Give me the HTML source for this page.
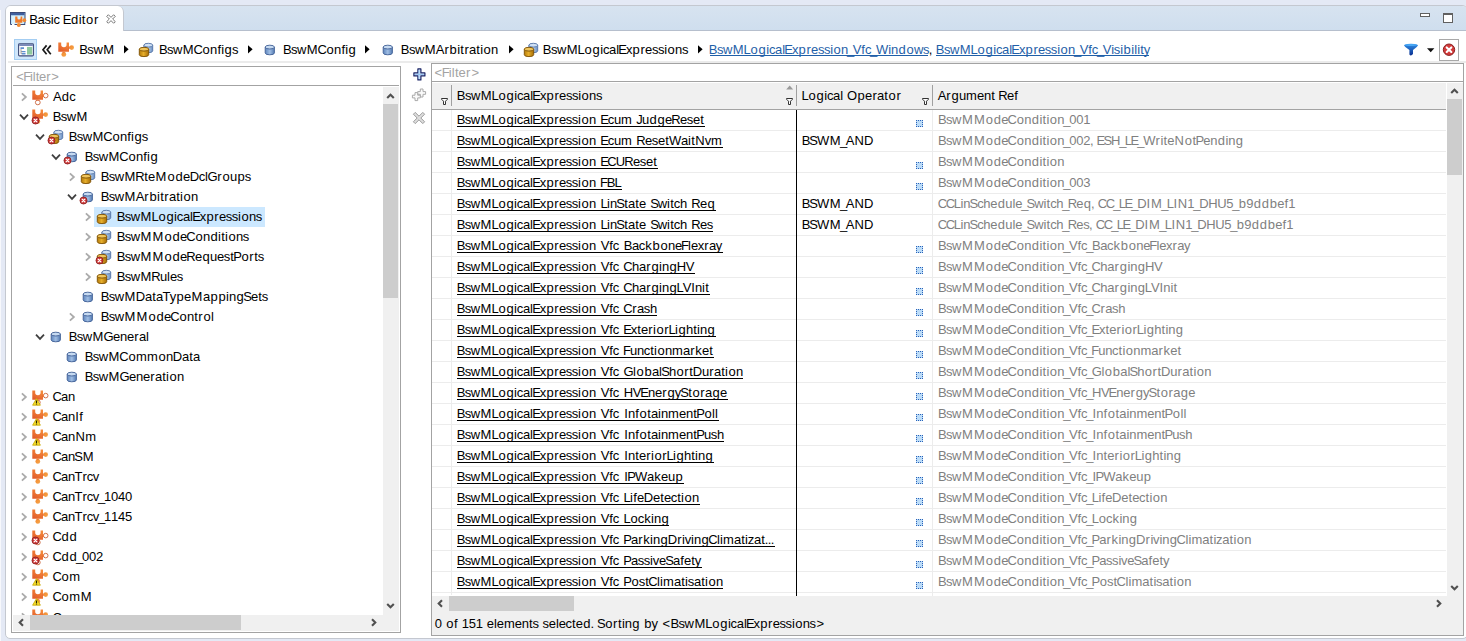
<!DOCTYPE html>
<html><head><meta charset="utf-8"><title>Basic Editor</title>
<style>
html,body{margin:0;padding:0}
body{width:1466px;height:641px;overflow:hidden;position:relative;background:#e4e9f5;font-family:"Liberation Sans", sans-serif;font-size:13px;color:#000}
.abs,.ic,.t{position:absolute}
.ic{display:block;overflow:visible}
#txt{position:absolute;left:0;top:0;display:block}
#txt text{white-space:pre;font-kerning:none;fill:#000}

#txt .lnk{fill:#1f5fa8}
#txt .gr{fill:#7f7f7f}
#txt .ph{fill:#a3a3a3}
#strip{position:absolute;left:0;top:10px;width:1px;height:631px;background:#f7f8fc}
#frame{position:absolute;left:5px;top:5px;width:1461px;height:632px;border:1px solid #c4c8d0;border-radius:6px 6px 5px 5px;background:#fff;overflow:hidden}
#tabbar{position:absolute;left:0;top:0;right:0;height:24px;background:linear-gradient(#d7e3f0,#cfdeee);border-bottom:1px solid #b6bfcd}
#tab{position:absolute;left:6px;top:6px;width:117px;height:25px;background:#fff;border-right:1px solid #c4c8d0;border-radius:5px 6px 0 0}
#bcline{position:absolute;left:8px;top:61px;width:1458px;height:2px;background:#ebebeb}
#tree{position:absolute;left:11px;top:66px;width:388px;height:565px;border:1px solid #a3a3a3;background:#fff}
#tfilter{position:absolute;left:1px;top:0;right:1px;height:18px;border-bottom:1px solid #a3a3a3}
#tsel{position:absolute;left:82px;top:140px;width:171px;height:20px;background:#cce8ff}
#tvs{z-index:5;position:absolute;left:371px;top:20px;width:16px;height:528px;background:#f0f0f0}
#ths{z-index:5;position:absolute;left:1px;top:548px;width:386px;height:16px;background:#f0f0f0}
.thumb{position:absolute;background:#cdcdcd}
#treeclip{position:absolute;left:12px;top:86px;width:371px;height:529px;overflow:hidden}
#treeclip>*{margin-left:-12px;margin-top:-86px}
#rp{position:absolute;left:431px;top:63px;width:1031px;height:571px;border:1px solid #a3a3a3;background:#f0f0f0}
#rfilter{position:absolute;left:0;top:0;right:0;height:17px;background:#fff;border-bottom:1px solid #a3a3a3}
#rhead{position:absolute;left:0;top:19px;width:1014px;height:26px;background:#f0f0f0;border-bottom:1px solid #a3a3a3}
#rbody{position:absolute;left:0;top:18px;width:1031px;height:514px;background:#fff}
#rvs{position:absolute;left:1015px;top:19px;width:16px;height:513px;background:#f0f0f0}
#rhs{position:absolute;left:0;top:532px;width:1014px;height:16px;background:#f0f0f0}
.sq{width:5px;height:5px;background:#bcdcf8;border:1px dotted #2a62b8}
</style></head>
<body>
<svg width="0" height="0" style="position:absolute;left:0;top:0"><defs><linearGradient id="gp" x1="0.8" y1="0" x2="0.2" y2="1"><stop offset="0" stop-color="#f58c3c"/><stop offset="1" stop-color="#e15a2a"/></linearGradient><linearGradient id="gk" x1="0" y1="0" x2="1" y2="1"><stop offset="0" stop-color="#f28a30"/><stop offset="1" stop-color="#f6a54a"/></linearGradient><linearGradient id="gb" x1="0" y1="0" x2="1" y2="0"><stop offset="0" stop-color="#5f86bd"/><stop offset="0.5" stop-color="#a0bee4"/><stop offset="1" stop-color="#547bb3"/></linearGradient><linearGradient id="gb2" x1="0" y1="0" x2="1" y2="0"><stop offset="0" stop-color="#7d9fcd"/><stop offset="0.5" stop-color="#b4cdea"/><stop offset="1" stop-color="#6a8fc2"/></linearGradient><linearGradient id="gy" x1="0" y1="0" x2="1" y2="0"><stop offset="0" stop-color="#b67d0a"/><stop offset="0.45" stop-color="#e6ae2c"/><stop offset="1" stop-color="#a86f05"/></linearGradient><linearGradient id="gf" x1="0" y1="0" x2="0" y2="1"><stop offset="0" stop-color="#2f8fe8"/><stop offset="1" stop-color="#0b2f8f"/></linearGradient></defs></svg>
<div id="strip"></div>
<div id="frame"><div id="tabbar"></div></div>
<div id="tab"></div>
<svg class="ic" style="left:10px;top:12px" width="17" height="16" viewBox="0 0 17 16">
<rect x="0.5" y="0.5" width="14.5" height="12" fill="#bfe3f8" stroke="#3a4a78"/>
<rect x="1" y="1" width="13.5" height="2.2" fill="#3f5f9f"/>
<rect x="2" y="4" width="11.5" height="8" fill="#d8f0fc"/>
<path d="M5.2 4.6 H7.4 V6 A1.6 1.6 0 0 0 10.6 6 V4.6 H12.3 V10.8 H5.2 Z" fill="#f07a2a"/>
<circle cx="14.3" cy="8.2" r="1.9" fill="#f28a30"/><circle cx="8.8" cy="12.9" r="2" fill="#f28a30"/>
<rect x="15" y="11" width="2" height="3" fill="#fff"/><rect x="0" y="12" width="4.5" height="2" fill="#fff"/>
<path d="M0.5 11 V12.5 H2" fill="none" stroke="#3a4a78"/><path d="M12.5 12.5 H15 V11.5" fill="none" stroke="#3a4a78"/>
</svg>
<svg class="ic" style="left:106px;top:14px" width="10" height="10" viewBox="0 0 11 11">
<path d="M0.8 2.6 L2.6 0.8 L5.5 3.7 L8.4 0.8 L10.2 2.6 L7.3 5.5 L10.2 8.4 L8.4 10.2 L5.5 7.3 L2.6 10.2 L0.8 8.4 L3.7 5.5 Z" fill="#fff" stroke="#5a5a5a" stroke-width="0.9"/></svg>
<div class="abs" style="left:1420px;top:13px;width:8px;height:2px;border:1px solid #606060;background:#fff"></div>
<div class="abs" style="left:1443px;top:13px;width:8px;height:7px;border:1px solid #606060;border-top-width:2px;background:#fff"></div>
<div id="bcline"></div>
<div class="abs" style="left:14px;top:39px;width:21px;height:19px;border:1px solid #a3cdf2;background:#cfe6fa"></div>
<svg class="ic" style="left:18px;top:43px" width="16" height="14" viewBox="0 0 16 15" preserveAspectRatio="none">
<rect x="0.6" y="0.8" width="14.8" height="13" rx="1" fill="#fff" stroke="#3d4b7a" stroke-width="1.1"/>
<rect x="1.2" y="1.4" width="13.6" height="1.6" fill="#5a6ea8"/>
<rect x="9" y="4.2" width="5.2" height="8.2" fill="#8fcaa0"/>
<path d="M2.5 4.5 H6 V6.5 H2.5 Z M4 8.5 H7.5 V10 H4 Z M4 10.8 H7.5 V12.3 H4 Z" fill="#5f8fd0"/>
<path d="M3 6.5 V11.5 H4 M3 9.2 H4" fill="none" stroke="#777" stroke-width="0.7"/>
</svg>
<svg class="ic" style="left:41.5px;top:45px" width="10" height="10" viewBox="0 0 10 10"><path d="M4.6 0.4 L1 4.8 L4.6 9.2 M8.8 0.4 L5.2 4.8 L8.8 9.2" fill="none" stroke="#1a1a1a" stroke-width="1.7"/></svg>
<svg class="ic" style="left:58px;top:42px" width="17" height="16" viewBox="0 0 17 16">
<path d="M0.3 0.6 H3.2 V2.6 A2.7 2.7 0 0 0 8.6 2.6 V0.6 H11 V9.8 H0.3 Z" fill="url(#gp)"/>
<circle cx="13.7" cy="5.6" r="2.3" fill="url(#gk)" stroke="none" stroke-width="0"/>
<rect x="10.6" y="4.4" width="1.2" height="2.4" fill="url(#gp)"/>
<circle cx="5.8" cy="12.4" r="2.4" fill="url(#gk)" stroke="none" stroke-width="0"/>
<rect x="4.6" y="9.4" width="2.4" height="1.1" fill="url(#gp)"/>
</svg>
<svg class="ic" style="left:124px;top:45px" width="5" height="9" viewBox="0 0 5 9"><path d="M0 0.2 L4.6 4.3 L0 8.4 Z" fill="#000"/></svg>
<svg class="ic" style="left:138px;top:40px" width="16" height="16" viewBox="0 0 16 16">
<path d="M5.9 5.199999999999999 V10.799999999999999 A4.4 1.9 0 0 0 14.700000000000001 10.799999999999999 V5.199999999999999 Z" fill="url(#gb2)" stroke="#5273a6" stroke-width="0.9"/><ellipse cx="10.3" cy="5.199999999999999" rx="4.4" ry="1.9" fill="#cfe0f4" stroke="#5273a6" stroke-width="0.9"/>
<path d="M1.2999999999999998 9.2 V14.700000000000001 A4.7 1.9 0 0 0 10.7 14.700000000000001 V9.2 Z" fill="url(#gy)" stroke="#7a4d00" stroke-width="0.9"/><ellipse cx="6.0" cy="9.2" rx="4.7" ry="1.9" fill="#efc55c" stroke="#7a4d00" stroke-width="0.9"/>
</svg>
<svg class="ic" style="left:248.3px;top:45px" width="5" height="9" viewBox="0 0 5 9"><path d="M0 0.2 L4.6 4.3 L0 8.4 Z" fill="#000"/></svg>
<svg class="ic" style="left:262px;top:40px" width="16" height="16" viewBox="0 0 16 16">
<path d="M3.2 7.1 V12.9 A4.6 1.9 0 0 0 12.399999999999999 12.9 V7.1 Z" fill="url(#gb)" stroke="#3f5f95" stroke-width="0.9"/><ellipse cx="7.8" cy="7.1" rx="4.6" ry="1.9" fill="#c6daf1" stroke="#3f5f95" stroke-width="0.9"/>
</svg>
<svg class="ic" style="left:365px;top:45px" width="5" height="9" viewBox="0 0 5 9"><path d="M0 0.2 L4.6 4.3 L0 8.4 Z" fill="#000"/></svg>
<svg class="ic" style="left:380px;top:40px" width="16" height="16" viewBox="0 0 16 16">
<path d="M3.2 7.1 V12.9 A4.6 1.9 0 0 0 12.399999999999999 12.9 V7.1 Z" fill="url(#gb)" stroke="#3f5f95" stroke-width="0.9"/><ellipse cx="7.8" cy="7.1" rx="4.6" ry="1.9" fill="#c6daf1" stroke="#3f5f95" stroke-width="0.9"/>
</svg>
<svg class="ic" style="left:508.5px;top:45px" width="5" height="9" viewBox="0 0 5 9"><path d="M0 0.2 L4.6 4.3 L0 8.4 Z" fill="#000"/></svg>
<svg class="ic" style="left:523px;top:40px" width="16" height="16" viewBox="0 0 16 16">
<path d="M5.9 5.199999999999999 V10.799999999999999 A4.4 1.9 0 0 0 14.700000000000001 10.799999999999999 V5.199999999999999 Z" fill="url(#gb2)" stroke="#5273a6" stroke-width="0.9"/><ellipse cx="10.3" cy="5.199999999999999" rx="4.4" ry="1.9" fill="#cfe0f4" stroke="#5273a6" stroke-width="0.9"/>
<path d="M1.2999999999999998 9.2 V14.700000000000001 A4.7 1.9 0 0 0 10.7 14.700000000000001 V9.2 Z" fill="url(#gy)" stroke="#7a4d00" stroke-width="0.9"/><ellipse cx="6.0" cy="9.2" rx="4.7" ry="1.9" fill="#efc55c" stroke="#7a4d00" stroke-width="0.9"/>
</svg>
<svg class="ic" style="left:697.8px;top:45px" width="5" height="9" viewBox="0 0 5 9"><path d="M0 0.2 L4.6 4.3 L0 8.4 Z" fill="#000"/></svg>
<svg class="ic" style="left:1403px;top:43px" width="16" height="14" viewBox="0 0 16 14">
<path d="M1 2 Q8 -0.6 15 2 Q15 3.4 10 7 V11 Q8 13.6 6.4 11.6 V7 Q1 3.4 1 2 Z" fill="url(#gf)"/>
<ellipse cx="8" cy="2" rx="6" ry="1.1" fill="#4aa8f5"/></svg>
<svg class="ic" style="left:1427px;top:48px" width="8" height="5" viewBox="0 0 8 5"><path d="M0 0.3 H7.4 L3.7 4.2 Z" fill="#111"/></svg>
<div class="abs" style="left:1439px;top:39px;width:18px;height:20px;border:1px solid #a8a8a8;background:#fff"></div>
<svg class="ic" style="left:1442px;top:43px" width="14" height="14" viewBox="0 0 14 14">
<circle cx="7" cy="6.7" r="5.7" fill="#d23a3a" stroke="#8a2020" stroke-width="1"/>
<path d="M4.7 4.4 L9.3 9 M9.3 4.4 L4.7 9" stroke="#fff" stroke-width="2.1" stroke-linecap="round"/></svg>
<div id="tree"><div id="tfilter"></div><div id="tsel"></div><div id="tvs"><div class="thumb" style="left:0;top:17px;width:15px;height:194px"></div></div><div id="ths"><div class="thumb" style="left:17px;top:0;width:211px;height:15px"></div></div></div>
<div id="treeclip"><svg class="ic" style="left:19.5px;top:91.5px" width="8" height="10" viewBox="0 0 8 10"><path d="M1.9 1.3 L5.9 5 L1.9 8.7" fill="none" stroke="#ababab" stroke-width="1.8"/></svg><svg class="ic" style="left:32px;top:90px" width="17" height="16" viewBox="0 0 17 16">
<path d="M0.3 0.6 H3.2 V2.6 A2.7 2.7 0 0 0 8.6 2.6 V0.6 H11 V9.8 H0.3 Z" fill="url(#gp)"/>
<circle cx="13.7" cy="5.6" r="2.3" fill="#fff" stroke="#c8623a" stroke-width="0.9"/>
<rect x="10.6" y="4.4" width="1.2" height="2.4" fill="url(#gp)"/>
<circle cx="5.8" cy="12.4" r="2.4" fill="#fff" stroke="#c8623a" stroke-width="0.9"/>
<rect x="4.6" y="9.4" width="2.4" height="1.1" fill="url(#gp)"/>
</svg><svg class="ic" style="left:18.5px;top:112.5px" width="10" height="8" viewBox="0 0 10 8"><path d="M1 1.7 L5 5.9 L9 1.7" fill="none" stroke="#404040" stroke-width="1.8"/></svg><svg class="ic" style="left:32px;top:109px" width="17" height="16" viewBox="0 0 17 16">
<path d="M0.3 0.6 H3.2 V2.6 A2.7 2.7 0 0 0 8.6 2.6 V0.6 H11 V9.8 H0.3 Z" fill="url(#gp)"/>
<circle cx="13.7" cy="5.6" r="2.3" fill="url(#gk)" stroke="none" stroke-width="0"/>
<rect x="10.6" y="4.4" width="1.2" height="2.4" fill="url(#gp)"/>
<circle cx="5.8" cy="12.4" r="2.4" fill="url(#gk)" stroke="none" stroke-width="0"/>
<rect x="4.6" y="9.4" width="2.4" height="1.1" fill="url(#gp)"/>
</svg><svg class="ic" style="left:31px;top:116px" width="9" height="9" viewBox="0 0 9 9">
<circle cx="4.5" cy="4.5" r="3.5" fill="#cf3535" stroke="#8e1f1f" stroke-width="0.9"/>
<path d="M3.1 3.1 L5.9 5.9 M5.9 3.1 L3.1 5.9" stroke="#fff" stroke-width="1.3" stroke-linecap="round"/>
</svg><svg class="ic" style="left:34.5px;top:132.5px" width="10" height="8" viewBox="0 0 10 8"><path d="M1 1.7 L5 5.9 L9 1.7" fill="none" stroke="#404040" stroke-width="1.8"/></svg><svg class="ic" style="left:48px;top:127px" width="16" height="16" viewBox="0 0 16 16">
<path d="M5.9 5.199999999999999 V10.799999999999999 A4.4 1.9 0 0 0 14.700000000000001 10.799999999999999 V5.199999999999999 Z" fill="url(#gb2)" stroke="#5273a6" stroke-width="0.9"/><ellipse cx="10.3" cy="5.199999999999999" rx="4.4" ry="1.9" fill="#cfe0f4" stroke="#5273a6" stroke-width="0.9"/>
<path d="M1.2999999999999998 9.2 V14.700000000000001 A4.7 1.9 0 0 0 10.7 14.700000000000001 V9.2 Z" fill="url(#gy)" stroke="#7a4d00" stroke-width="0.9"/><ellipse cx="6.0" cy="9.2" rx="4.7" ry="1.9" fill="#efc55c" stroke="#7a4d00" stroke-width="0.9"/>
</svg><svg class="ic" style="left:47px;top:136px" width="9" height="9" viewBox="0 0 9 9">
<circle cx="4.5" cy="4.5" r="3.5" fill="#cf3535" stroke="#8e1f1f" stroke-width="0.9"/>
<path d="M3.1 3.1 L5.9 5.9 M5.9 3.1 L3.1 5.9" stroke="#fff" stroke-width="1.3" stroke-linecap="round"/>
</svg><svg class="ic" style="left:50.5px;top:152.5px" width="10" height="8" viewBox="0 0 10 8"><path d="M1 1.7 L5 5.9 L9 1.7" fill="none" stroke="#404040" stroke-width="1.8"/></svg><svg class="ic" style="left:64px;top:147px" width="16" height="16" viewBox="0 0 16 16">
<path d="M3.2 7.1 V12.9 A4.6 1.9 0 0 0 12.399999999999999 12.9 V7.1 Z" fill="url(#gb)" stroke="#3f5f95" stroke-width="0.9"/><ellipse cx="7.8" cy="7.1" rx="4.6" ry="1.9" fill="#c6daf1" stroke="#3f5f95" stroke-width="0.9"/>
</svg><svg class="ic" style="left:63px;top:156px" width="9" height="9" viewBox="0 0 9 9">
<circle cx="4.5" cy="4.5" r="3.5" fill="#cf3535" stroke="#8e1f1f" stroke-width="0.9"/>
<path d="M3.1 3.1 L5.9 5.9 M5.9 3.1 L3.1 5.9" stroke="#fff" stroke-width="1.3" stroke-linecap="round"/>
</svg><svg class="ic" style="left:67.5px;top:171.5px" width="8" height="10" viewBox="0 0 8 10"><path d="M1.9 1.3 L5.9 5 L1.9 8.7" fill="none" stroke="#ababab" stroke-width="1.8"/></svg><svg class="ic" style="left:80px;top:167px" width="16" height="16" viewBox="0 0 16 16">
<path d="M5.9 5.199999999999999 V10.799999999999999 A4.4 1.9 0 0 0 14.700000000000001 10.799999999999999 V5.199999999999999 Z" fill="url(#gb2)" stroke="#5273a6" stroke-width="0.9"/><ellipse cx="10.3" cy="5.199999999999999" rx="4.4" ry="1.9" fill="#cfe0f4" stroke="#5273a6" stroke-width="0.9"/>
<path d="M1.2999999999999998 9.2 V14.700000000000001 A4.7 1.9 0 0 0 10.7 14.700000000000001 V9.2 Z" fill="url(#gy)" stroke="#7a4d00" stroke-width="0.9"/><ellipse cx="6.0" cy="9.2" rx="4.7" ry="1.9" fill="#efc55c" stroke="#7a4d00" stroke-width="0.9"/>
</svg><svg class="ic" style="left:66.5px;top:192.5px" width="10" height="8" viewBox="0 0 10 8"><path d="M1 1.7 L5 5.9 L9 1.7" fill="none" stroke="#404040" stroke-width="1.8"/></svg><svg class="ic" style="left:80px;top:187px" width="16" height="16" viewBox="0 0 16 16">
<path d="M3.2 7.1 V12.9 A4.6 1.9 0 0 0 12.399999999999999 12.9 V7.1 Z" fill="url(#gb)" stroke="#3f5f95" stroke-width="0.9"/><ellipse cx="7.8" cy="7.1" rx="4.6" ry="1.9" fill="#c6daf1" stroke="#3f5f95" stroke-width="0.9"/>
</svg><svg class="ic" style="left:79px;top:196px" width="9" height="9" viewBox="0 0 9 9">
<circle cx="4.5" cy="4.5" r="3.5" fill="#cf3535" stroke="#8e1f1f" stroke-width="0.9"/>
<path d="M3.1 3.1 L5.9 5.9 M5.9 3.1 L3.1 5.9" stroke="#fff" stroke-width="1.3" stroke-linecap="round"/>
</svg><svg class="ic" style="left:83.5px;top:211.5px" width="8" height="10" viewBox="0 0 8 10"><path d="M1.9 1.3 L5.9 5 L1.9 8.7" fill="none" stroke="#ababab" stroke-width="1.8"/></svg><svg class="ic" style="left:96px;top:207px" width="16" height="16" viewBox="0 0 16 16">
<path d="M5.9 5.199999999999999 V10.799999999999999 A4.4 1.9 0 0 0 14.700000000000001 10.799999999999999 V5.199999999999999 Z" fill="url(#gb2)" stroke="#5273a6" stroke-width="0.9"/><ellipse cx="10.3" cy="5.199999999999999" rx="4.4" ry="1.9" fill="#cfe0f4" stroke="#5273a6" stroke-width="0.9"/>
<path d="M1.2999999999999998 9.2 V14.700000000000001 A4.7 1.9 0 0 0 10.7 14.700000000000001 V9.2 Z" fill="url(#gy)" stroke="#7a4d00" stroke-width="0.9"/><ellipse cx="6.0" cy="9.2" rx="4.7" ry="1.9" fill="#efc55c" stroke="#7a4d00" stroke-width="0.9"/>
</svg><svg class="ic" style="left:83.5px;top:231.5px" width="8" height="10" viewBox="0 0 8 10"><path d="M1.9 1.3 L5.9 5 L1.9 8.7" fill="none" stroke="#ababab" stroke-width="1.8"/></svg><svg class="ic" style="left:96px;top:227px" width="16" height="16" viewBox="0 0 16 16">
<path d="M5.9 5.199999999999999 V10.799999999999999 A4.4 1.9 0 0 0 14.700000000000001 10.799999999999999 V5.199999999999999 Z" fill="url(#gb2)" stroke="#5273a6" stroke-width="0.9"/><ellipse cx="10.3" cy="5.199999999999999" rx="4.4" ry="1.9" fill="#cfe0f4" stroke="#5273a6" stroke-width="0.9"/>
<path d="M1.2999999999999998 9.2 V14.700000000000001 A4.7 1.9 0 0 0 10.7 14.700000000000001 V9.2 Z" fill="url(#gy)" stroke="#7a4d00" stroke-width="0.9"/><ellipse cx="6.0" cy="9.2" rx="4.7" ry="1.9" fill="#efc55c" stroke="#7a4d00" stroke-width="0.9"/>
</svg><svg class="ic" style="left:83.5px;top:251.5px" width="8" height="10" viewBox="0 0 8 10"><path d="M1.9 1.3 L5.9 5 L1.9 8.7" fill="none" stroke="#ababab" stroke-width="1.8"/></svg><svg class="ic" style="left:96px;top:247px" width="16" height="16" viewBox="0 0 16 16">
<path d="M5.9 5.199999999999999 V10.799999999999999 A4.4 1.9 0 0 0 14.700000000000001 10.799999999999999 V5.199999999999999 Z" fill="url(#gb2)" stroke="#5273a6" stroke-width="0.9"/><ellipse cx="10.3" cy="5.199999999999999" rx="4.4" ry="1.9" fill="#cfe0f4" stroke="#5273a6" stroke-width="0.9"/>
<path d="M1.2999999999999998 9.2 V14.700000000000001 A4.7 1.9 0 0 0 10.7 14.700000000000001 V9.2 Z" fill="url(#gy)" stroke="#7a4d00" stroke-width="0.9"/><ellipse cx="6.0" cy="9.2" rx="4.7" ry="1.9" fill="#efc55c" stroke="#7a4d00" stroke-width="0.9"/>
</svg><svg class="ic" style="left:95px;top:256px" width="9" height="9" viewBox="0 0 9 9">
<circle cx="4.5" cy="4.5" r="3.5" fill="#cf3535" stroke="#8e1f1f" stroke-width="0.9"/>
<path d="M3.1 3.1 L5.9 5.9 M5.9 3.1 L3.1 5.9" stroke="#fff" stroke-width="1.3" stroke-linecap="round"/>
</svg><svg class="ic" style="left:83.5px;top:271.5px" width="8" height="10" viewBox="0 0 8 10"><path d="M1.9 1.3 L5.9 5 L1.9 8.7" fill="none" stroke="#ababab" stroke-width="1.8"/></svg><svg class="ic" style="left:96px;top:267px" width="16" height="16" viewBox="0 0 16 16">
<path d="M5.9 5.199999999999999 V10.799999999999999 A4.4 1.9 0 0 0 14.700000000000001 10.799999999999999 V5.199999999999999 Z" fill="url(#gb2)" stroke="#5273a6" stroke-width="0.9"/><ellipse cx="10.3" cy="5.199999999999999" rx="4.4" ry="1.9" fill="#cfe0f4" stroke="#5273a6" stroke-width="0.9"/>
<path d="M1.2999999999999998 9.2 V14.700000000000001 A4.7 1.9 0 0 0 10.7 14.700000000000001 V9.2 Z" fill="url(#gy)" stroke="#7a4d00" stroke-width="0.9"/><ellipse cx="6.0" cy="9.2" rx="4.7" ry="1.9" fill="#efc55c" stroke="#7a4d00" stroke-width="0.9"/>
</svg><svg class="ic" style="left:80px;top:287px" width="16" height="16" viewBox="0 0 16 16">
<path d="M3.2 7.1 V12.9 A4.6 1.9 0 0 0 12.399999999999999 12.9 V7.1 Z" fill="url(#gb)" stroke="#3f5f95" stroke-width="0.9"/><ellipse cx="7.8" cy="7.1" rx="4.6" ry="1.9" fill="#c6daf1" stroke="#3f5f95" stroke-width="0.9"/>
</svg><svg class="ic" style="left:67.5px;top:311.5px" width="8" height="10" viewBox="0 0 8 10"><path d="M1.9 1.3 L5.9 5 L1.9 8.7" fill="none" stroke="#ababab" stroke-width="1.8"/></svg><svg class="ic" style="left:80px;top:307px" width="16" height="16" viewBox="0 0 16 16">
<path d="M3.2 7.1 V12.9 A4.6 1.9 0 0 0 12.399999999999999 12.9 V7.1 Z" fill="url(#gb)" stroke="#3f5f95" stroke-width="0.9"/><ellipse cx="7.8" cy="7.1" rx="4.6" ry="1.9" fill="#c6daf1" stroke="#3f5f95" stroke-width="0.9"/>
</svg><svg class="ic" style="left:34.5px;top:332.5px" width="10" height="8" viewBox="0 0 10 8"><path d="M1 1.7 L5 5.9 L9 1.7" fill="none" stroke="#404040" stroke-width="1.8"/></svg><svg class="ic" style="left:48px;top:327px" width="16" height="16" viewBox="0 0 16 16">
<path d="M3.2 7.1 V12.9 A4.6 1.9 0 0 0 12.399999999999999 12.9 V7.1 Z" fill="url(#gb)" stroke="#3f5f95" stroke-width="0.9"/><ellipse cx="7.8" cy="7.1" rx="4.6" ry="1.9" fill="#c6daf1" stroke="#3f5f95" stroke-width="0.9"/>
</svg><svg class="ic" style="left:64px;top:347px" width="16" height="16" viewBox="0 0 16 16">
<path d="M3.2 7.1 V12.9 A4.6 1.9 0 0 0 12.399999999999999 12.9 V7.1 Z" fill="url(#gb)" stroke="#3f5f95" stroke-width="0.9"/><ellipse cx="7.8" cy="7.1" rx="4.6" ry="1.9" fill="#c6daf1" stroke="#3f5f95" stroke-width="0.9"/>
</svg><svg class="ic" style="left:64px;top:367px" width="16" height="16" viewBox="0 0 16 16">
<path d="M3.2 7.1 V12.9 A4.6 1.9 0 0 0 12.399999999999999 12.9 V7.1 Z" fill="url(#gb)" stroke="#3f5f95" stroke-width="0.9"/><ellipse cx="7.8" cy="7.1" rx="4.6" ry="1.9" fill="#c6daf1" stroke="#3f5f95" stroke-width="0.9"/>
</svg><svg class="ic" style="left:19.5px;top:391.5px" width="8" height="10" viewBox="0 0 8 10"><path d="M1.9 1.3 L5.9 5 L1.9 8.7" fill="none" stroke="#ababab" stroke-width="1.8"/></svg><svg class="ic" style="left:32px;top:390px" width="17" height="16" viewBox="0 0 17 16">
<path d="M0.3 0.6 H3.2 V2.6 A2.7 2.7 0 0 0 8.6 2.6 V0.6 H11 V9.8 H0.3 Z" fill="url(#gp)"/>
<circle cx="13.7" cy="5.6" r="2.3" fill="#fff" stroke="#c8623a" stroke-width="0.9"/>
<rect x="10.6" y="4.4" width="1.2" height="2.4" fill="url(#gp)"/>
<circle cx="5.8" cy="12.4" r="2.4" fill="#fff" stroke="#c8623a" stroke-width="0.9"/>
<rect x="4.6" y="9.4" width="2.4" height="1.1" fill="url(#gp)"/>
</svg><svg class="ic" style="left:31.7px;top:397.6px" width="9" height="8" viewBox="0 0 9 8">
<path d="M4.5 0.6 L8.4 7.2 H0.6 Z" fill="#f7e02a" stroke="#c4a400" stroke-width="0.8" stroke-linejoin="round"/>
<path d="M4.5 2.4 V4.9 M4.5 5.6 V6.5" stroke="#2a2400" stroke-width="1.2"/>
</svg><svg class="ic" style="left:19.5px;top:411.5px" width="8" height="10" viewBox="0 0 8 10"><path d="M1.9 1.3 L5.9 5 L1.9 8.7" fill="none" stroke="#ababab" stroke-width="1.8"/></svg><svg class="ic" style="left:32px;top:409px" width="17" height="16" viewBox="0 0 17 16">
<path d="M0.3 0.6 H3.2 V2.6 A2.7 2.7 0 0 0 8.6 2.6 V0.6 H11 V9.8 H0.3 Z" fill="url(#gp)"/>
<circle cx="13.7" cy="5.6" r="2.3" fill="url(#gk)" stroke="none" stroke-width="0"/>
<rect x="10.6" y="4.4" width="1.2" height="2.4" fill="url(#gp)"/>
<circle cx="5.8" cy="12.4" r="2.4" fill="url(#gk)" stroke="none" stroke-width="0"/>
<rect x="4.6" y="9.4" width="2.4" height="1.1" fill="url(#gp)"/>
</svg><svg class="ic" style="left:31.7px;top:417.6px" width="9" height="8" viewBox="0 0 9 8">
<path d="M4.5 0.6 L8.4 7.2 H0.6 Z" fill="#f7e02a" stroke="#c4a400" stroke-width="0.8" stroke-linejoin="round"/>
<path d="M4.5 2.4 V4.9 M4.5 5.6 V6.5" stroke="#2a2400" stroke-width="1.2"/>
</svg><svg class="ic" style="left:19.5px;top:431.5px" width="8" height="10" viewBox="0 0 8 10"><path d="M1.9 1.3 L5.9 5 L1.9 8.7" fill="none" stroke="#ababab" stroke-width="1.8"/></svg><svg class="ic" style="left:32px;top:429px" width="17" height="16" viewBox="0 0 17 16">
<path d="M0.3 0.6 H3.2 V2.6 A2.7 2.7 0 0 0 8.6 2.6 V0.6 H11 V9.8 H0.3 Z" fill="url(#gp)"/>
<circle cx="13.7" cy="5.6" r="2.3" fill="url(#gk)" stroke="none" stroke-width="0"/>
<rect x="10.6" y="4.4" width="1.2" height="2.4" fill="url(#gp)"/>
<circle cx="5.8" cy="12.4" r="2.4" fill="url(#gk)" stroke="none" stroke-width="0"/>
<rect x="4.6" y="9.4" width="2.4" height="1.1" fill="url(#gp)"/>
</svg><svg class="ic" style="left:31.7px;top:437.6px" width="9" height="8" viewBox="0 0 9 8">
<path d="M4.5 0.6 L8.4 7.2 H0.6 Z" fill="#f7e02a" stroke="#c4a400" stroke-width="0.8" stroke-linejoin="round"/>
<path d="M4.5 2.4 V4.9 M4.5 5.6 V6.5" stroke="#2a2400" stroke-width="1.2"/>
</svg><svg class="ic" style="left:19.5px;top:451.5px" width="8" height="10" viewBox="0 0 8 10"><path d="M1.9 1.3 L5.9 5 L1.9 8.7" fill="none" stroke="#ababab" stroke-width="1.8"/></svg><svg class="ic" style="left:32px;top:449px" width="17" height="16" viewBox="0 0 17 16">
<path d="M0.3 0.6 H3.2 V2.6 A2.7 2.7 0 0 0 8.6 2.6 V0.6 H11 V9.8 H0.3 Z" fill="url(#gp)"/>
<circle cx="13.7" cy="5.6" r="2.3" fill="url(#gk)" stroke="none" stroke-width="0"/>
<rect x="10.6" y="4.4" width="1.2" height="2.4" fill="url(#gp)"/>
<circle cx="5.8" cy="12.4" r="2.4" fill="url(#gk)" stroke="none" stroke-width="0"/>
<rect x="4.6" y="9.4" width="2.4" height="1.1" fill="url(#gp)"/>
</svg><svg class="ic" style="left:19.5px;top:471.5px" width="8" height="10" viewBox="0 0 8 10"><path d="M1.9 1.3 L5.9 5 L1.9 8.7" fill="none" stroke="#ababab" stroke-width="1.8"/></svg><svg class="ic" style="left:32px;top:469px" width="17" height="16" viewBox="0 0 17 16">
<path d="M0.3 0.6 H3.2 V2.6 A2.7 2.7 0 0 0 8.6 2.6 V0.6 H11 V9.8 H0.3 Z" fill="url(#gp)"/>
<circle cx="13.7" cy="5.6" r="2.3" fill="url(#gk)" stroke="none" stroke-width="0"/>
<rect x="10.6" y="4.4" width="1.2" height="2.4" fill="url(#gp)"/>
<circle cx="5.8" cy="12.4" r="2.4" fill="url(#gk)" stroke="none" stroke-width="0"/>
<rect x="4.6" y="9.4" width="2.4" height="1.1" fill="url(#gp)"/>
</svg><svg class="ic" style="left:19.5px;top:491.5px" width="8" height="10" viewBox="0 0 8 10"><path d="M1.9 1.3 L5.9 5 L1.9 8.7" fill="none" stroke="#ababab" stroke-width="1.8"/></svg><svg class="ic" style="left:32px;top:489px" width="17" height="16" viewBox="0 0 17 16">
<path d="M0.3 0.6 H3.2 V2.6 A2.7 2.7 0 0 0 8.6 2.6 V0.6 H11 V9.8 H0.3 Z" fill="url(#gp)"/>
<circle cx="13.7" cy="5.6" r="2.3" fill="url(#gk)" stroke="none" stroke-width="0"/>
<rect x="10.6" y="4.4" width="1.2" height="2.4" fill="url(#gp)"/>
<circle cx="5.8" cy="12.4" r="2.4" fill="url(#gk)" stroke="none" stroke-width="0"/>
<rect x="4.6" y="9.4" width="2.4" height="1.1" fill="url(#gp)"/>
</svg><svg class="ic" style="left:19.5px;top:511.5px" width="8" height="10" viewBox="0 0 8 10"><path d="M1.9 1.3 L5.9 5 L1.9 8.7" fill="none" stroke="#ababab" stroke-width="1.8"/></svg><svg class="ic" style="left:32px;top:509px" width="17" height="16" viewBox="0 0 17 16">
<path d="M0.3 0.6 H3.2 V2.6 A2.7 2.7 0 0 0 8.6 2.6 V0.6 H11 V9.8 H0.3 Z" fill="url(#gp)"/>
<circle cx="13.7" cy="5.6" r="2.3" fill="url(#gk)" stroke="none" stroke-width="0"/>
<rect x="10.6" y="4.4" width="1.2" height="2.4" fill="url(#gp)"/>
<circle cx="5.8" cy="12.4" r="2.4" fill="url(#gk)" stroke="none" stroke-width="0"/>
<rect x="4.6" y="9.4" width="2.4" height="1.1" fill="url(#gp)"/>
</svg><svg class="ic" style="left:19.5px;top:531.5px" width="8" height="10" viewBox="0 0 8 10"><path d="M1.9 1.3 L5.9 5 L1.9 8.7" fill="none" stroke="#ababab" stroke-width="1.8"/></svg><svg class="ic" style="left:32px;top:530px" width="17" height="16" viewBox="0 0 17 16">
<path d="M0.3 0.6 H3.2 V2.6 A2.7 2.7 0 0 0 8.6 2.6 V0.6 H11 V9.8 H0.3 Z" fill="url(#gp)"/>
<circle cx="13.7" cy="5.6" r="2.3" fill="#fff" stroke="#c8623a" stroke-width="0.9"/>
<rect x="10.6" y="4.4" width="1.2" height="2.4" fill="url(#gp)"/>
<circle cx="5.8" cy="12.4" r="2.4" fill="#fff" stroke="#c8623a" stroke-width="0.9"/>
<rect x="4.6" y="9.4" width="2.4" height="1.1" fill="url(#gp)"/>
</svg><svg class="ic" style="left:31px;top:536px" width="9" height="9" viewBox="0 0 9 9">
<circle cx="4.5" cy="4.5" r="3.5" fill="#cf3535" stroke="#8e1f1f" stroke-width="0.9"/>
<path d="M3.1 3.1 L5.9 5.9 M5.9 3.1 L3.1 5.9" stroke="#fff" stroke-width="1.3" stroke-linecap="round"/>
</svg><svg class="ic" style="left:19.5px;top:551.5px" width="8" height="10" viewBox="0 0 8 10"><path d="M1.9 1.3 L5.9 5 L1.9 8.7" fill="none" stroke="#ababab" stroke-width="1.8"/></svg><svg class="ic" style="left:32px;top:550px" width="17" height="16" viewBox="0 0 17 16">
<path d="M0.3 0.6 H3.2 V2.6 A2.7 2.7 0 0 0 8.6 2.6 V0.6 H11 V9.8 H0.3 Z" fill="url(#gp)"/>
<circle cx="13.7" cy="5.6" r="2.3" fill="#fff" stroke="#c8623a" stroke-width="0.9"/>
<rect x="10.6" y="4.4" width="1.2" height="2.4" fill="url(#gp)"/>
<circle cx="5.8" cy="12.4" r="2.4" fill="#fff" stroke="#c8623a" stroke-width="0.9"/>
<rect x="4.6" y="9.4" width="2.4" height="1.1" fill="url(#gp)"/>
</svg><svg class="ic" style="left:31px;top:556px" width="9" height="9" viewBox="0 0 9 9">
<circle cx="4.5" cy="4.5" r="3.5" fill="#cf3535" stroke="#8e1f1f" stroke-width="0.9"/>
<path d="M3.1 3.1 L5.9 5.9 M5.9 3.1 L3.1 5.9" stroke="#fff" stroke-width="1.3" stroke-linecap="round"/>
</svg><svg class="ic" style="left:19.5px;top:571.5px" width="8" height="10" viewBox="0 0 8 10"><path d="M1.9 1.3 L5.9 5 L1.9 8.7" fill="none" stroke="#ababab" stroke-width="1.8"/></svg><svg class="ic" style="left:32px;top:569px" width="17" height="16" viewBox="0 0 17 16">
<path d="M0.3 0.6 H3.2 V2.6 A2.7 2.7 0 0 0 8.6 2.6 V0.6 H11 V9.8 H0.3 Z" fill="url(#gp)"/>
<circle cx="13.7" cy="5.6" r="2.3" fill="url(#gk)" stroke="none" stroke-width="0"/>
<rect x="10.6" y="4.4" width="1.2" height="2.4" fill="url(#gp)"/>
<circle cx="5.8" cy="12.4" r="2.4" fill="url(#gk)" stroke="none" stroke-width="0"/>
<rect x="4.6" y="9.4" width="2.4" height="1.1" fill="url(#gp)"/>
</svg><svg class="ic" style="left:31.7px;top:577.6px" width="9" height="8" viewBox="0 0 9 8">
<path d="M4.5 0.6 L8.4 7.2 H0.6 Z" fill="#f7e02a" stroke="#c4a400" stroke-width="0.8" stroke-linejoin="round"/>
<path d="M4.5 2.4 V4.9 M4.5 5.6 V6.5" stroke="#2a2400" stroke-width="1.2"/>
</svg><svg class="ic" style="left:19.5px;top:591.5px" width="8" height="10" viewBox="0 0 8 10"><path d="M1.9 1.3 L5.9 5 L1.9 8.7" fill="none" stroke="#ababab" stroke-width="1.8"/></svg><svg class="ic" style="left:32px;top:589px" width="17" height="16" viewBox="0 0 17 16">
<path d="M0.3 0.6 H3.2 V2.6 A2.7 2.7 0 0 0 8.6 2.6 V0.6 H11 V9.8 H0.3 Z" fill="url(#gp)"/>
<circle cx="13.7" cy="5.6" r="2.3" fill="url(#gk)" stroke="none" stroke-width="0"/>
<rect x="10.6" y="4.4" width="1.2" height="2.4" fill="url(#gp)"/>
<circle cx="5.8" cy="12.4" r="2.4" fill="url(#gk)" stroke="none" stroke-width="0"/>
<rect x="4.6" y="9.4" width="2.4" height="1.1" fill="url(#gp)"/>
</svg><svg class="ic" style="left:31.7px;top:597.6px" width="9" height="8" viewBox="0 0 9 8">
<path d="M4.5 0.6 L8.4 7.2 H0.6 Z" fill="#f7e02a" stroke="#c4a400" stroke-width="0.8" stroke-linejoin="round"/>
<path d="M4.5 2.4 V4.9 M4.5 5.6 V6.5" stroke="#2a2400" stroke-width="1.2"/>
</svg><svg class="ic" style="left:19.5px;top:611.5px" width="8" height="10" viewBox="0 0 8 10"><path d="M1.9 1.3 L5.9 5 L1.9 8.7" fill="none" stroke="#ababab" stroke-width="1.8"/></svg><svg class="ic" style="left:32px;top:609px" width="17" height="16" viewBox="0 0 17 16">
<path d="M0.3 0.6 H3.2 V2.6 A2.7 2.7 0 0 0 8.6 2.6 V0.6 H11 V9.8 H0.3 Z" fill="url(#gp)"/>
<circle cx="13.7" cy="5.6" r="2.3" fill="url(#gk)" stroke="none" stroke-width="0"/>
<rect x="10.6" y="4.4" width="1.2" height="2.4" fill="url(#gp)"/>
<circle cx="5.8" cy="12.4" r="2.4" fill="url(#gk)" stroke="none" stroke-width="0"/>
<rect x="4.6" y="9.4" width="2.4" height="1.1" fill="url(#gp)"/>
</svg><svg class="ic" style="left:31.7px;top:617.6px" width="9" height="8" viewBox="0 0 9 8">
<path d="M4.5 0.6 L8.4 7.2 H0.6 Z" fill="#f7e02a" stroke="#c4a400" stroke-width="0.8" stroke-linejoin="round"/>
<path d="M4.5 2.4 V4.9 M4.5 5.6 V6.5" stroke="#2a2400" stroke-width="1.2"/>
</svg></div>
<svg class="ic" style="z-index:6;left:386.0px;top:91.5px" width="9" height="9" viewBox="0 0 9 9"><path d="M1.2 6 L4.5 2.7 L7.8 6" fill="none" stroke="#505050" stroke-width="2.1"/></svg>
<svg class="ic" style="z-index:6;left:386.0px;top:601.0px" width="9" height="9" viewBox="0 0 9 9"><path d="M1.2 3 L4.5 6.3 L7.8 3" fill="none" stroke="#505050" stroke-width="2.1"/></svg>
<svg class="ic" style="z-index:6;left:17.0px;top:618.0px" width="9" height="9" viewBox="0 0 9 9"><path d="M6 1.2 L2.7 4.5 L6 7.8" fill="none" stroke="#505050" stroke-width="2.1"/></svg>
<svg class="ic" style="z-index:6;left:369.0px;top:618.0px" width="9" height="9" viewBox="0 0 9 9"><path d="M3 1.2 L6.3 4.5 L3 7.8" fill="none" stroke="#505050" stroke-width="2.1"/></svg>
<svg class="ic" style="left:413px;top:68px" width="13" height="13" viewBox="0 0 13 13">
<path d="M4.9 0.9 H7.9 V4.9 H11.9 V7.9 H7.9 V11.9 H4.9 V7.9 H0.9 V4.9 H4.9 Z" fill="#dcecfc" stroke="#1a2566" stroke-width="1.2" stroke-linejoin="round"/><path d="M5.9 2 V10.8 M2 6.4 H10.8" stroke="#8fc0f0" stroke-width="0.9"/></svg>
<svg class="ic" style="left:411px;top:88px" width="16" height="14" viewBox="0 0 16 14">
<path d="M9.3 1 H12 V3.6 H14.6 V6.3 H12 V9 H9.3 V6.3 H6.7 V3.6 H9.3 Z" fill="#fafafa" stroke="#a9a9a9" stroke-width="1"/>
<path d="M4 4.6 H6.7 V7.2 H9.3 V9.9 H6.7 V12.6 H4 V9.9 H1.4 V7.2 H4 Z" fill="#fafafa" stroke="#a9a9a9" stroke-width="1"/></svg>
<svg class="ic" style="left:412px;top:111px" width="14" height="14" viewBox="0 0 14 14">
<path d="M1.4 3.2 L3.2 1.4 L7 5.2 L10.8 1.4 L12.6 3.2 L8.8 7 L12.6 10.8 L10.8 12.6 L7 8.8 L3.2 12.6 L1.4 10.8 L5.2 7 Z" fill="#dedede" stroke="#9a9a9a" stroke-width="1"/></svg>
<div id="rp"><div id="rfilter"></div><div id="rbody"></div><div id="rhead"></div><div id="rvs"><div class="thumb" style="left:0;top:16px;width:15px;height:76px"></div></div><div id="rhs"><div class="thumb" style="left:17px;top:0;width:125px;height:15px"></div></div></div>
<div class="abs" style="left:451px;top:85px;width:1px;height:21px;background:#a0a0a0"></div>
<div class="abs" style="left:796px;top:85px;width:1px;height:21px;background:#a0a0a0"></div>
<div class="abs" style="left:932px;top:85px;width:1px;height:21px;background:#a0a0a0"></div>
<svg class="ic" style="left:441px;top:98px" width="7" height="7" viewBox="0 0 7 7"><path d="M0.5 0.5 H6.5 V1.2 L4.5 3.2 V6.5 H2.5 V3.2 L0.5 1.2 Z" fill="#fff" stroke="#333" stroke-width="1" stroke-linejoin="miter"/></svg>
<svg class="ic" style="left:786px;top:98px" width="7" height="7" viewBox="0 0 7 7"><path d="M0.5 0.5 H6.5 V1.2 L4.5 3.2 V6.5 H2.5 V3.2 L0.5 1.2 Z" fill="#fff" stroke="#333" stroke-width="1" stroke-linejoin="miter"/></svg>
<svg class="ic" style="left:922px;top:98px" width="7" height="7" viewBox="0 0 7 7"><path d="M0.5 0.5 H6.5 V1.2 L4.5 3.2 V6.5 H2.5 V3.2 L0.5 1.2 Z" fill="#fff" stroke="#333" stroke-width="1" stroke-linejoin="miter"/></svg>
<svg class="ic" style="left:786px;top:85px" width="8" height="5" viewBox="0 0 8 5"><path d="M0.2 4.6 L3.7 0.6 L7.2 4.6 Z" fill="#9a9a9a"/></svg>
<div class="abs" style="left:451px;top:110px;width:1px;height:485px;background:#ececec"></div>
<div class="abs" style="left:932px;top:110px;width:1px;height:486px;background:#ececec"></div>
<div class="abs" style="left:432px;top:130px;width:1014px;height:1px;background:#ececec"></div>
<div class="abs" style="left:432px;top:151px;width:1014px;height:1px;background:#ececec"></div>
<div class="abs" style="left:432px;top:172px;width:1014px;height:1px;background:#ececec"></div>
<div class="abs" style="left:432px;top:193px;width:1014px;height:1px;background:#ececec"></div>
<div class="abs" style="left:432px;top:214px;width:1014px;height:1px;background:#ececec"></div>
<div class="abs" style="left:432px;top:235px;width:1014px;height:1px;background:#ececec"></div>
<div class="abs" style="left:432px;top:256px;width:1014px;height:1px;background:#ececec"></div>
<div class="abs" style="left:432px;top:277px;width:1014px;height:1px;background:#ececec"></div>
<div class="abs" style="left:432px;top:298px;width:1014px;height:1px;background:#ececec"></div>
<div class="abs" style="left:432px;top:319px;width:1014px;height:1px;background:#ececec"></div>
<div class="abs" style="left:432px;top:340px;width:1014px;height:1px;background:#ececec"></div>
<div class="abs" style="left:432px;top:361px;width:1014px;height:1px;background:#ececec"></div>
<div class="abs" style="left:432px;top:382px;width:1014px;height:1px;background:#ececec"></div>
<div class="abs" style="left:432px;top:403px;width:1014px;height:1px;background:#ececec"></div>
<div class="abs" style="left:432px;top:424px;width:1014px;height:1px;background:#ececec"></div>
<div class="abs" style="left:432px;top:445px;width:1014px;height:1px;background:#ececec"></div>
<div class="abs" style="left:432px;top:466px;width:1014px;height:1px;background:#ececec"></div>
<div class="abs" style="left:432px;top:487px;width:1014px;height:1px;background:#ececec"></div>
<div class="abs" style="left:432px;top:508px;width:1014px;height:1px;background:#ececec"></div>
<div class="abs" style="left:432px;top:529px;width:1014px;height:1px;background:#ececec"></div>
<div class="abs" style="left:432px;top:550px;width:1014px;height:1px;background:#ececec"></div>
<div class="abs" style="left:432px;top:571px;width:1014px;height:1px;background:#ececec"></div>
<div class="abs" style="left:432px;top:592px;width:1014px;height:1px;background:#ececec"></div>
<div class="abs" style="left:796px;top:110px;width:1px;height:486px;background:#000"></div>
<div class="abs sq" style="left:916px;top:120px"></div>
<div class="abs sq" style="left:916px;top:162px"></div>
<div class="abs sq" style="left:916px;top:183px"></div>
<div class="abs sq" style="left:916px;top:246px"></div>
<div class="abs sq" style="left:916px;top:267px"></div>
<div class="abs sq" style="left:916px;top:288px"></div>
<div class="abs sq" style="left:916px;top:309px"></div>
<div class="abs sq" style="left:916px;top:330px"></div>
<div class="abs sq" style="left:916px;top:351px"></div>
<div class="abs sq" style="left:916px;top:372px"></div>
<div class="abs sq" style="left:916px;top:393px"></div>
<div class="abs sq" style="left:916px;top:414px"></div>
<div class="abs sq" style="left:916px;top:435px"></div>
<div class="abs sq" style="left:916px;top:456px"></div>
<div class="abs sq" style="left:916px;top:477px"></div>
<div class="abs sq" style="left:916px;top:498px"></div>
<div class="abs sq" style="left:916px;top:519px"></div>
<div class="abs sq" style="left:916px;top:540px"></div>
<div class="abs sq" style="left:916px;top:561px"></div>
<div class="abs sq" style="left:916px;top:582px"></div>
<svg class="ic" style="z-index:6;left:1450.0px;top:87.0px" width="9" height="9" viewBox="0 0 9 9"><path d="M1.2 6 L4.5 2.7 L7.8 6" fill="none" stroke="#505050" stroke-width="2.1"/></svg>
<svg class="ic" style="z-index:6;left:1450.0px;top:582.5px" width="9" height="9" viewBox="0 0 9 9"><path d="M1.2 3 L4.5 6.3 L7.8 3" fill="none" stroke="#505050" stroke-width="2.1"/></svg>
<svg class="ic" style="z-index:6;left:436.0px;top:599.0px" width="9" height="9" viewBox="0 0 9 9"><path d="M6 1.2 L2.7 4.5 L6 7.8" fill="none" stroke="#505050" stroke-width="2.1"/></svg>
<svg class="ic" style="z-index:6;left:1433.5px;top:599.0px" width="9" height="9" viewBox="0 0 9 9"><path d="M3 1.2 L6.3 4.5 L3 7.8" fill="none" stroke="#505050" stroke-width="2.1"/></svg>
<svg id="txt" width="1466" height="641" viewBox="0 0 1466 641">
<text x="29.3 37.5 44.4 50.7 53.4 59.8 62.8 71 78.7 81.8 86 93.9" y="24">Basic Editor</text>
<text x="79.3 87.3 93.4 103.2" y="54">BswM</text>
<text x="158.9 166.9 173 182.8 193.5 202.6 210.1 217.4 221.3 224.6 231.9" y="54">BswMConfigs</text>
<text x="282.9 291 297 306.8 317.5 326.6 334.1 341.4 345.3 348.6" y="54">BswMConfig</text>
<text x="400.8 408.9 414.9 424.7 435.8 444.4 449.5 457.2 460.3 464.4 469 476.3 480.2 483.5 491" y="54">BswMArbitration</text>
<text x="542.8 550.9 556.9 566.7 577.5 584.5 592.5 600.2 602.9 609 616.2 618.3 625.9 632.5 640.4 645 651.9 657.9 664.2 667.5 675 681.9" y="54">BswMLogicalExpressions</text>
<text class="lnk" x="708.8 716.9 722.9 732.7 743.5 750.5 758.5 766.2 768.9 775 782.2 784.3 791.9 798.5 806.4 811 817.9 823.9 830.2 833.5 841 847 852.8 861.3 864.9 870 876 888.2 891 898.5 906.5 913.9 922.9" y="54">BswMLogicalExpression_Vfc_Windows</text>
<text x="928.8" y="54">,</text>
<text class="lnk" x="935.8 943.9 949.9 959.7 970.5 977.5 985.5 993.2 995.9 1002 1009.2 1011.3 1018.9 1025.5 1033.4 1038 1044.8 1050.8 1057.2 1060.5 1068 1074 1079.8 1088.3 1091.8 1097 1102.8 1111.2 1113.8 1120.2 1123.5 1131.2 1134.2 1137.2 1140.3 1143.8" y="54">BswMLogicalExpression_Vfc_Visibility</text>
<text class="ph" x="16.3 23.3 30.1 32.8 35.7 39.1 46.2 51.3" y="81">&lt;Filter&gt;</text>
<text x="53.1 61.8 69.2" y="101">Adc</text>
<text x="52.7 60.8 66.8 76.6" y="121">BswM</text>
<text x="68.7 76.8 82.8 92.6 103.3 112.4 119.9 127.2 131.1 134.4 141.8" y="141">BswMConfigs</text>
<text x="84.7 92.8 98.8 108.6 119.3 128.4 135.9 143.2 147.1 150.4" y="161">BswMConfig</text>
<text x="100.7 108.8 114.8 124.6 135.3 144.2 147.9 155.6 167.4 175.4 182.9 189.8 198.8 205.1 207.4 217.3 222.4 229.9 237.4 244.8" y="181">BswMRteModeDclGroups</text>
<text x="100.7 108.8 114.8 124.6 135.7 144.3 149.4 157.1 160.2 164.3 168.9 176.2 180.1 183.4 190.9" y="201">BswMArbitration</text>
<text x="116.7 124.8 130.8 140.6 151.4 158.4 166.4 174.1 176.8 182.9 190.1 192.2 199.8 206.4 214.3 218.9 225.8 231.8 238.1 241.4 248.9 255.8" y="221">BswMLogicalExpressions</text>
<text x="116.7 124.8 130.8 140.6 152.6 164.4 172.4 179.9 186.3 195.4 202.9 210.4 218.1 221.2 225.1 228.4 235.9 242.8" y="241">BswMModeConditions</text>
<text x="116.7 124.8 130.8 140.6 152.6 164.4 172.4 179.9 186.3 194.9 202.4 209.9 216.9 223.8 230.2 233.2 241.4 249.3 254.2 257.8" y="261">BswMModeRequestPorts</text>
<text x="116.7 124.8 130.8 140.6 151.3 159.9 167.1 169.9 176.8" y="281">BswMRules</text>
<text x="100.7 108.8 114.8 124.6 135.8 144.9 152.2 155.9 162.5 169.8 176.4 183.9 191.6 202.9 210.4 218.4 226.1 228.9 236.4 243.2 250.9 258.2 261.8" y="301">BswMDataTypeMappingSets</text>
<text x="100.7 108.8 114.8 124.6 136.6 148.4 156.4 163.9 170.3 179.4 186.9 194.2 198.3 203.4 211.1" y="321">BswMModeControl</text>
<text x="68.7 76.8 82.8 92.6 103.4 112.9 119.9 126.9 134.3 138.9 146.1" y="341">BswMGeneral</text>
<text x="84.7 92.8 98.8 108.6 119.3 128.4 136.1 147.1 158.4 165.9 172.8 181.9 189.2 192.9" y="361">BswMCommonData</text>
<text x="84.7 92.8 98.8 108.6 119.4 128.9 135.9 142.9 150.3 154.9 162.2 166.1 169.4 176.9" y="381">BswMGeneration</text>
<text x="52.4 61 68" y="401">Can</text>
<text x="52.4 61 68 75.3 79.3" y="421">CanIf</text>
<text x="52.4 61 68 75.4 85.2" y="441">CanNm</text>
<text x="52.4 61 68 74.3 82.7" y="461">CanSM</text>
<text x="52.4 61 68 74.6 82.4 86.8 92.8" y="481">CanTrcv</text>
<text x="52.4 61 68 74.6 82.4 86.8 92.8 98 104 111 118 125" y="501">CanTrcv_1040</text>
<text x="52.4 61 68 74.6 82.4 86.8 92.8 98 104 111 118 125" y="521">CanTrcv_1145</text>
<text x="52.4 61.5 69.5" y="541">Cdd</text>
<text x="52.4 61.5 69.5 76 82 89 96" y="561">Cdd_002</text>
<text x="52.4 61.5 69.2" y="581">Com</text>
<text x="52.4 61.5 69.2 80.7" y="601">ComM</text>
<text x="52.4 60.9 67.2" y="621.7">Csm</text>
<text class="ph" x="434.4 441.7 448.8 451.8 454.9 458.6 466 471.4" y="77">&lt;Filter&gt;</text>
<text x="456.8 464.9 470.9 480.7 491.5 498.5 506.5 514.2 516.9 523 530.2 532.3 539.9 546.5 554.4 559 565.9 571.9 578.2 581.5 589 595.9" y="100">BswMLogicalExpressions</text>
<text x="801.5 808.5 816.5 824.2 826.9 833 840.2 843.3 847 857.5 865 872.4 877 884.3 888.5 896.4" y="100">Logical Operator</text>
<text x="937.7 946.3 951.4 958.9 966.1 976.9 983.9 991.2 995.2 998.3 1006.9 1014.2" y="100">Argument Ref</text>
<text x="456.7 464.8 470.8 480.6 491.4 498.4 506.4 514.1 516.8 522.9 530.1 532.2 539.8 546.4 554.3 558.9 565.8 571.8 578.1 581.4 588.9 594.9 600.2 607.8 613.9 621.1 630.9 636.2 641.9 649.4 657.4 664.9 671.3 679.9 686.8 692.9 700.2" y="124">BswMLogicalExpression_Ecum_JudgeReset</text>
<text class="gr" x="938 946.1 952.1 961.9 973.9 985.7 993.7 1001.2 1007.6 1016.7 1024.2 1031.7 1039.4 1042.5 1046.4 1049.7 1057.2 1063.2 1069.2 1076.2 1083.2" y="124">BswMModeCondition_001</text>
<text x="456.7 464.8 470.8 480.6 491.4 498.4 506.4 514.1 516.8 522.9 530.1 532.2 539.8 546.4 554.3 558.9 565.8 571.8 578.1 581.4 588.9 594.9 600.2 607.8 613.9 621.1 630.9 636.3 644.9 651.8 657.9 665.2 668.9 680.9 688.1 691.2 695.3 704.8 711.1" y="145">BswMLogicalExpression_Ecum_ResetWaitNvm</text>
<text x="801.8 809.3 817 829.7 840 845.8 854.4 863.9" y="145">BSWM_AND</text>
<text class="gr" x="938 946.1 952.1 961.9 973.9 985.7 993.7 1001.2 1007.6 1016.7 1024.2 1031.7 1039.4 1042.5 1046.4 1049.7 1057.2 1063.2 1069.2 1076.2 1083.2 1090 1093.5 1096.5 1103.5 1111.1 1119.2 1124.7 1130.5 1137.2 1143.2 1155.6 1160.4 1163.5 1167.2 1174.6 1184.7 1192.5 1195.5 1203.2 1210.2 1217.7 1225.4 1228.2 1235.7" y="145">BswMModeCondition_002, ESH_LE_WriteNotPending</text>
<text x="456.7 464.8 470.8 480.6 491.4 498.4 506.4 514.1 516.8 522.9 530.1 532.2 539.8 546.4 554.3 558.9 565.8 571.8 578.1 581.4 588.9 594.9 600.2 607.3 615.8 624.3 632.9 639.8 645.9 653.2" y="166">BswMLogicalExpression_ECUReset</text>
<text class="gr" x="938 946.1 952.1 961.9 973.9 985.7 993.7 1001.2 1007.6 1016.7 1024.2 1031.7 1039.4 1042.5 1046.4 1049.7 1057.2" y="166">BswMModeCondition</text>
<text x="456.7 464.8 470.8 480.6 491.4 498.4 506.4 514.1 516.8 522.9 530.1 532.2 539.8 546.4 554.3 558.9 565.8 571.8 578.1 581.4 588.9 594.9 600 606.7 614.4" y="187">BswMLogicalExpression_FBL</text>
<text class="gr" x="938 946.1 952.1 961.9 973.9 985.7 993.7 1001.2 1007.6 1016.7 1024.2 1031.7 1039.4 1042.5 1046.4 1049.7 1057.2 1063.2 1069.2 1076.2 1083.2" y="187">BswMModeCondition_003</text>
<text x="456.7 464.8 470.8 480.6 491.4 498.4 506.4 514.1 516.8 522.9 530.1 532.2 539.8 546.4 554.3 558.9 565.8 571.8 578.1 581.4 588.9 594.9 600.4 607.1 609.9 616.2 624.2 627.9 635.2 638.9 644.9 650.2 657.8 667.1 670.2 673.8 679.9 685.9 691.3 699.9 707.4" y="208">BswMLogicalExpression_LinState_Switch_Req</text>
<text x="801.8 809.3 817 829.7 840 845.8 854.4 863.9" y="208">BSWM_AND</text>
<text class="gr" x="937.7 945.7 953.8 960.5 963.3 969.6 977.2 983.3 990.3 997.8 1005.3 1012.5 1015.3 1021.3 1026.6 1034.2 1043.5 1046.6 1050.2 1056.3 1062.3 1067.7 1076.3 1083.8 1091.1 1094.6 1097.7 1105.7 1113.3 1118.8 1124.6 1131.3 1137.2 1146.6 1151 1161.3 1166.8 1173.6 1177.7 1187.3 1193.3 1199.2 1208.2 1217.2 1226.3 1232.3 1238.8 1246.3 1253.8 1261.8 1269.8 1277.3 1284.6 1288.3" y="208">CCLinSchedule_Switch_Req, CC_LE_DIM_LIN1_DHU5_b9ddbef1</text>
<text x="456.7 464.8 470.8 480.6 491.4 498.4 506.4 514.1 516.8 522.9 530.1 532.2 539.8 546.4 554.3 558.9 565.8 571.8 578.1 581.4 588.9 594.9 600.4 607.1 609.9 616.2 624.2 627.9 635.2 638.9 644.9 650.2 657.8 667.1 670.2 673.8 679.9 685.9 691.3 699.9 706.8" y="229">BswMLogicalExpression_LinState_Switch_Res</text>
<text x="801.8 809.3 817 829.7 840 845.8 854.4 863.9" y="229">BSWM_AND</text>
<text class="gr" x="937.7 945.7 953.8 960.5 963.3 969.6 977.2 983.3 990.3 997.8 1005.3 1012.5 1015.3 1021.3 1026.6 1034.2 1043.5 1046.6 1050.2 1056.3 1062.3 1067.7 1076.3 1083.2 1089.1 1092.6 1095.7 1103.7 1111.3 1116.8 1122.6 1129.3 1135.2 1144.6 1149 1159.3 1164.8 1171.6 1175.7 1185.3 1191.3 1197.2 1206.2 1215.2 1224.3 1230.3 1236.8 1244.3 1251.8 1259.8 1267.8 1275.3 1282.6 1286.3" y="229">CCLinSchedule_Switch_Res, CC_LE_DIM_LIN1_DHU5_b9ddbef1</text>
<text x="456.7 464.8 470.8 480.6 491.4 498.4 506.4 514.1 516.8 522.9 530.1 532.2 539.8 546.4 554.3 558.9 565.8 571.8 578.1 581.4 588.9 594.9 600.7 609.2 612.8 617.9 623.7 631.9 638.8 645.2 652.4 660.4 667.9 674.9 681 688.1 690.9 697.8 704.3 708.9 715.8" y="250">BswMLogicalExpression_Vfc_BackboneFlexray</text>
<text class="gr" x="938 946.1 952.1 961.9 973.9 985.7 993.7 1001.2 1007.6 1016.7 1024.2 1031.7 1039.4 1042.5 1046.4 1049.7 1057.2 1063.2 1069 1077.5 1081.1 1086.2 1092 1100.2 1107.1 1113.6 1120.7 1128.7 1136.2 1143.2 1149.3 1156.4 1159.2 1166.1 1172.6 1177.2 1184.1" y="250">BswMModeCondition_Vfc_BackboneFlexray</text>
<text x="456.7 464.8 470.8 480.6 491.4 498.4 506.4 514.1 516.8 522.9 530.1 532.2 539.8 546.4 554.3 558.9 565.8 571.8 578.1 581.4 588.9 594.9 600.7 609.2 612.8 617.9 623.3 631.9 638.9 646.3 651.4 659.1 661.9 669.4 676.8 685.7" y="271">BswMLogicalExpression_Vfc_ChargingHV</text>
<text class="gr" x="938 946.1 952.1 961.9 973.9 985.7 993.7 1001.2 1007.6 1016.7 1024.2 1031.7 1039.4 1042.5 1046.4 1049.7 1057.2 1063.2 1069 1077.5 1081.1 1086.2 1091.6 1100.2 1107.2 1114.6 1119.7 1127.4 1130.2 1137.7 1145.1 1154" y="271">BswMModeCondition_Vfc_ChargingHV</text>
<text x="456.7 464.8 470.8 480.6 491.4 498.4 506.4 514.1 516.8 522.9 530.1 532.2 539.8 546.4 554.3 558.9 565.8 571.8 578.1 581.4 588.9 594.9 600.7 609.2 612.8 617.9 623.3 631.9 638.9 646.3 651.4 659.1 661.9 669.4 676.4 682.7 691.2 694.9 702.1 705.2" y="292">BswMLogicalExpression_Vfc_ChargingLVInit</text>
<text class="gr" x="938 946.1 952.1 961.9 973.9 985.7 993.7 1001.2 1007.6 1016.7 1024.2 1031.7 1039.4 1042.5 1046.4 1049.7 1057.2 1063.2 1069 1077.5 1081.1 1086.2 1091.6 1100.2 1107.2 1114.6 1119.7 1127.4 1130.2 1137.7 1144.7 1151 1159.5 1163.2 1170.4 1173.5" y="292">BswMModeCondition_Vfc_ChargingLVInit</text>
<text x="456.7 464.8 470.8 480.6 491.4 498.4 506.4 514.1 516.8 522.9 530.1 532.2 539.8 546.4 554.3 558.9 565.8 571.8 578.1 581.4 588.9 594.9 600.7 609.2 612.8 617.9 623.3 632.3 636.9 643.8 649.9" y="313">BswMLogicalExpression_Vfc_Crash</text>
<text class="gr" x="938 946.1 952.1 961.9 973.9 985.7 993.7 1001.2 1007.6 1016.7 1024.2 1031.7 1039.4 1042.5 1046.4 1049.7 1057.2 1063.2 1069 1077.5 1081.1 1086.2 1091.6 1100.6 1105.2 1112.1 1118.2" y="313">BswMModeCondition_Vfc_Crash</text>
<text x="456.7 464.8 470.8 480.6 491.4 498.4 506.4 514.1 516.8 522.9 530.1 532.2 539.8 546.4 554.3 558.9 565.8 571.8 578.1 581.4 588.9 594.9 600.7 609.2 612.8 617.9 623.2 630.8 637.2 640.9 648.3 653.1 656.4 664.3 668.4 675.1 678.4 685.9 693.2 697.1 699.9 707.4" y="334">BswMLogicalExpression_Vfc_ExteriorLighting</text>
<text class="gr" x="938 946.1 952.1 961.9 973.9 985.7 993.7 1001.2 1007.6 1016.7 1024.2 1031.7 1039.4 1042.5 1046.4 1049.7 1057.2 1063.2 1069 1077.5 1081.1 1086.2 1091.5 1099.1 1105.5 1109.2 1116.6 1121.4 1124.7 1132.6 1136.7 1143.4 1146.7 1154.2 1161.5 1165.4 1168.2 1175.7" y="334">BswMModeCondition_Vfc_ExteriorLighting</text>
<text x="456.7 464.8 470.8 480.6 491.4 498.4 506.4 514.1 516.8 522.9 530.1 532.2 539.8 546.4 554.3 558.9 565.8 571.8 578.1 581.4 588.9 594.9 600.7 609.2 612.8 617.9 623 629.9 636.9 643.8 650.2 654.1 657.4 664.9 672.1 682.9 690.3 695.2 701.9 709.2" y="355">BswMLogicalExpression_Vfc_Functionmarket</text>
<text class="gr" x="938 946.1 952.1 961.9 973.9 985.7 993.7 1001.2 1007.6 1016.7 1024.2 1031.7 1039.4 1042.5 1046.4 1049.7 1057.2 1063.2 1069 1077.5 1081.1 1086.2 1091.3 1098.2 1105.2 1112.1 1118.5 1122.4 1125.7 1133.2 1140.4 1151.2 1158.6 1163.6 1170.2 1177.5" y="355">BswMModeCondition_Vfc_Functionmarket</text>
<text x="456.7 464.8 470.8 480.6 491.4 498.4 506.4 514.1 516.8 522.9 530.1 532.2 539.8 546.4 554.3 558.9 565.8 571.8 578.1 581.4 588.9 594.9 600.7 609.2 612.8 617.9 623.4 633.1 636.4 644.4 651.9 659.1 661.2 668.9 676.4 684.3 689.2 692.8 701.9 709.3 713.9 721.2 725.1 728.4 735.9" y="376">BswMLogicalExpression_Vfc_GlobalShortDuration</text>
<text class="gr" x="938 946.1 952.1 961.9 973.9 985.7 993.7 1001.2 1007.6 1016.7 1024.2 1031.7 1039.4 1042.5 1046.4 1049.7 1057.2 1063.2 1069 1077.5 1081.1 1086.2 1091.7 1101.4 1104.7 1112.7 1120.2 1127.4 1129.5 1137.2 1144.7 1152.6 1157.5 1161.1 1170.2 1177.6 1182.2 1189.5 1193.4 1196.7 1204.2" y="376">BswMModeCondition_Vfc_GlobalShortDuration</text>
<text x="456.7 464.8 470.8 480.6 491.4 498.4 506.4 514.1 516.8 522.9 530.1 532.2 539.8 546.4 554.3 558.9 565.8 571.8 578.1 581.4 588.9 594.9 600.7 609.2 612.8 617.9 623.8 632.7 640.2 647.9 654.9 662.3 667.4 674.8 680.2 688.2 692.4 700.3 704.9 712.4 719.9" y="397">BswMLogicalExpression_Vfc_HVEnergyStorage</text>
<text class="gr" x="938 946.1 952.1 961.9 973.9 985.7 993.7 1001.2 1007.6 1016.7 1024.2 1031.7 1039.4 1042.5 1046.4 1049.7 1057.2 1063.2 1069 1077.5 1081.1 1086.2 1092.1 1101 1108.5 1116.2 1123.2 1130.6 1135.7 1143.1 1148.5 1156.5 1160.7 1168.6 1173.2 1180.7 1188.2" y="397">BswMModeCondition_Vfc_HVEnergyStorage</text>
<text x="456.7 464.8 470.8 480.6 491.4 498.4 506.4 514.1 516.8 522.9 530.1 532.2 539.8 546.4 554.3 558.9 565.8 571.8 578.1 581.4 588.9 594.9 600.7 609.2 612.8 617.9 624.2 627.9 635.2 639.4 647.2 650.9 658.1 660.9 668.1 678.9 685.9 693.2 696.2 704.4 712.1 715.1" y="418">BswMLogicalExpression_Vfc_InfotainmentPoll</text>
<text class="gr" x="938 946.1 952.1 961.9 973.9 985.7 993.7 1001.2 1007.6 1016.7 1024.2 1031.7 1039.4 1042.5 1046.4 1049.7 1057.2 1063.2 1069 1077.5 1081.1 1086.2 1092.5 1096.2 1103.5 1107.7 1115.5 1119.2 1126.4 1129.2 1136.4 1147.2 1154.2 1161.5 1164.5 1172.7 1180.4 1183.4" y="418">BswMModeCondition_Vfc_InfotainmentPoll</text>
<text x="456.7 464.8 470.8 480.6 491.4 498.4 506.4 514.1 516.8 522.9 530.1 532.2 539.8 546.4 554.3 558.9 565.8 571.8 578.1 581.4 588.9 594.9 600.7 609.2 612.8 617.9 624.2 627.9 635.2 639.4 647.2 650.9 658.1 660.9 668.1 678.9 685.9 693.2 696.2 703.9 710.8 716.9" y="439">BswMLogicalExpression_Vfc_InfotainmentPush</text>
<text class="gr" x="938 946.1 952.1 961.9 973.9 985.7 993.7 1001.2 1007.6 1016.7 1024.2 1031.7 1039.4 1042.5 1046.4 1049.7 1057.2 1063.2 1069 1077.5 1081.1 1086.2 1092.5 1096.2 1103.5 1107.7 1115.5 1119.2 1126.4 1129.2 1136.4 1147.2 1154.2 1161.5 1164.5 1172.2 1179.1 1185.2" y="439">BswMModeCondition_Vfc_InfotainmentPush</text>
<text x="456.7 464.8 470.8 480.6 491.4 498.4 506.4 514.1 516.8 522.9 530.1 532.2 539.8 546.4 554.3 558.9 565.8 571.8 578.1 581.4 588.9 594.9 600.7 609.2 612.8 617.9 624.2 627.9 635.2 638.9 646.3 651.1 654.4 662.3 666.4 673.1 676.4 683.9 691.2 695.1 697.9 705.4" y="460">BswMLogicalExpression_Vfc_InteriorLighting</text>
<text class="gr" x="938 946.1 952.1 961.9 973.9 985.7 993.7 1001.2 1007.6 1016.7 1024.2 1031.7 1039.4 1042.5 1046.4 1049.7 1057.2 1063.2 1069 1077.5 1081.1 1086.2 1092.5 1096.2 1103.5 1107.2 1114.6 1119.4 1122.7 1130.6 1134.7 1141.4 1144.7 1152.2 1159.5 1163.4 1166.2 1173.7" y="460">BswMModeCondition_Vfc_InteriorLighting</text>
<text x="456.7 464.8 470.8 480.6 491.4 498.4 506.4 514.1 516.8 522.9 530.1 532.2 539.8 546.4 554.3 558.9 565.8 571.8 578.1 581.4 588.9 594.9 600.7 609.2 612.8 617.9 624.2 627.2 634.9 646.9 654.2 660.9 667.9 675.4" y="481">BswMLogicalExpression_Vfc_IPWakeup</text>
<text class="gr" x="938 946.1 952.1 961.9 973.9 985.7 993.7 1001.2 1007.6 1016.7 1024.2 1031.7 1039.4 1042.5 1046.4 1049.7 1057.2 1063.2 1069 1077.5 1081.1 1086.2 1092.5 1095.5 1103.2 1115.2 1122.6 1129.2 1136.2 1143.7" y="481">BswMModeCondition_Vfc_IPWakeup</text>
<text x="456.7 464.8 470.8 480.6 491.4 498.4 506.4 514.1 516.8 522.9 530.1 532.2 539.8 546.4 554.3 558.9 565.8 571.8 578.1 581.4 588.9 594.9 600.7 609.2 612.8 617.9 623.4 630.1 633.2 636.9 643.8 652.9 660.2 663.9 670.8 677.2 681.1 684.4 691.9" y="502">BswMLogicalExpression_Vfc_LifeDetection</text>
<text class="gr" x="938 946.1 952.1 961.9 973.9 985.7 993.7 1001.2 1007.6 1016.7 1024.2 1031.7 1039.4 1042.5 1046.4 1049.7 1057.2 1063.2 1069 1077.5 1081.1 1086.2 1091.7 1098.4 1101.5 1105.2 1112.1 1121.2 1128.5 1132.2 1139.1 1145.5 1149.4 1152.7 1160.2" y="502">BswMModeCondition_Vfc_LifeDetection</text>
<text x="456.7 464.8 470.8 480.6 491.4 498.4 506.4 514.1 516.8 522.9 530.1 532.2 539.8 546.4 554.3 558.9 565.8 571.8 578.1 581.4 588.9 594.9 600.7 609.2 612.8 617.9 623.4 630.4 637.8 644.2 651.1 653.9 661.4" y="523">BswMLogicalExpression_Vfc_Locking</text>
<text class="gr" x="938 946.1 952.1 961.9 973.9 985.7 993.7 1001.2 1007.6 1016.7 1024.2 1031.7 1039.4 1042.5 1046.4 1049.7 1057.2 1063.2 1069 1077.5 1081.1 1086.2 1091.7 1098.7 1106.1 1112.6 1119.4 1122.2 1129.7" y="523">BswMModeCondition_Vfc_Locking</text>
<text x="456.7 464.8 470.8 480.6 491.4 498.4 506.4 514.1 516.8 522.9 530.1 532.2 539.8 546.4 554.3 558.9 565.8 571.8 578.1 581.4 588.9 594.9 600.7 609.2 612.8 617.9 623.2 630.9 638.3 643.2 650.1 652.9 660.4 667.8 677.3 682.1 684.8 691.1 693.9 701.4 708.3 717.1 720.1 723.1 733.9 741.2 745.1 747.8 753.9 761.2 764.7 767.7 770.7" y="544">BswMLogicalExpression_Vfc_ParkingDrivingClimatizat...</text>
<text class="gr" x="938 946.1 952.1 961.9 973.9 985.7 993.7 1001.2 1007.6 1016.7 1024.2 1031.7 1039.4 1042.5 1046.4 1049.7 1057.2 1063.2 1069 1077.5 1081.1 1086.2 1091.5 1099.2 1106.6 1111.6 1118.4 1121.2 1128.7 1136.1 1145.6 1150.4 1153.1 1159.4 1162.2 1169.7 1176.6 1185.4 1188.4 1191.4 1202.2 1209.5 1213.4 1216.1 1222.2 1229.5 1233.4 1236.7 1244.2" y="544">BswMModeCondition_Vfc_ParkingDrivingClimatization</text>
<text x="456.7 464.8 470.8 480.6 491.4 498.4 506.4 514.1 516.8 522.9 530.1 532.2 539.8 546.4 554.3 558.9 565.8 571.8 578.1 581.4 588.9 594.9 600.7 609.2 612.8 617.9 623.2 630.9 637.8 643.8 650.1 652.8 658.9 665.2 672.9 680.2 683.9 691.2 694.8" y="565">BswMLogicalExpression_Vfc_PassiveSafety</text>
<text class="gr" x="938 946.1 952.1 961.9 973.9 985.7 993.7 1001.2 1007.6 1016.7 1024.2 1031.7 1039.4 1042.5 1046.4 1049.7 1057.2 1063.2 1069 1077.5 1081.1 1086.2 1091.5 1099.2 1106.1 1112.1 1118.4 1121.1 1127.2 1133.5 1141.2 1148.5 1152.2 1159.5 1163.1" y="565">BswMModeCondition_Vfc_PassiveSafety</text>
<text x="456.7 464.8 470.8 480.6 491.4 498.4 506.4 514.1 516.8 522.9 530.1 532.2 539.8 546.4 554.3 558.9 565.8 571.8 578.1 581.4 588.9 594.9 600.7 609.2 612.8 617.9 623.2 631.4 638.8 645.2 648.3 657.1 660.1 663.1 673.9 681.2 685.1 687.8 693.9 701.2 705.1 708.4 715.9" y="586">BswMLogicalExpression_Vfc_PostClimatisation</text>
<text class="gr" x="938 946.1 952.1 961.9 973.9 985.7 993.7 1001.2 1007.6 1016.7 1024.2 1031.7 1039.4 1042.5 1046.4 1049.7 1057.2 1063.2 1069 1077.5 1081.1 1086.2 1091.5 1099.7 1107.1 1113.5 1116.6 1125.4 1128.4 1131.4 1142.2 1149.5 1153.4 1156.1 1162.2 1169.5 1173.4 1176.7 1184.2" y="586">BswMModeCondition_Vfc_PostClimatisation</text>
<text x="434.7 442 446.2 454 458 461.7 468.7 475.7 483 486.7 493.9 496.7 503.9 514.7 521.7 529 532.5 539 542.5 548.7 555.9 558.7 565.5 572 575.7 583.2 590.5 594 597 605.2 613.1 618 621.9 624.7 632.2 640 644.2 651.5 658 662.5 670.5 678.5 684.6 694.4 705.2 712.2 720.2 727.9 730.5 736.7 743.9 746 753.5 760.2 768.1 772.7 779.5 785.5 791.9 795.2 802.7 809.5 816.5" y="628">0 of 151 elements selected. Sorting by &lt;BswMLogicalExpressions&gt;</text>
</svg>
<div class="abs" style="left:710px;top:55px;width:218px;height:1px;background:#1f5fa8"></div>
<div class="abs" style="left:936px;top:55px;width:213px;height:1px;background:#1f5fa8"></div>
<div class="abs" style="left:457px;top:126px;width:248px;height:1px;background:#000"></div>
<div class="abs" style="left:457px;top:147px;width:266px;height:1px;background:#000"></div>
<div class="abs" style="left:457px;top:168px;width:201px;height:1px;background:#000"></div>
<div class="abs" style="left:457px;top:189px;width:165px;height:1px;background:#000"></div>
<div class="abs" style="left:457px;top:210px;width:259px;height:1px;background:#000"></div>
<div class="abs" style="left:457px;top:231px;width:256px;height:1px;background:#000"></div>
<div class="abs" style="left:457px;top:252px;width:266px;height:1px;background:#000"></div>
<div class="abs" style="left:457px;top:273px;width:238px;height:1px;background:#000"></div>
<div class="abs" style="left:457px;top:294px;width:253px;height:1px;background:#000"></div>
<div class="abs" style="left:457px;top:315px;width:200px;height:1px;background:#000"></div>
<div class="abs" style="left:457px;top:336px;width:259px;height:1px;background:#000"></div>
<div class="abs" style="left:457px;top:357px;width:257px;height:1px;background:#000"></div>
<div class="abs" style="left:457px;top:378px;width:286px;height:1px;background:#000"></div>
<div class="abs" style="left:457px;top:399px;width:271px;height:1px;background:#000"></div>
<div class="abs" style="left:457px;top:420px;width:262px;height:1px;background:#000"></div>
<div class="abs" style="left:457px;top:441px;width:267px;height:1px;background:#000"></div>
<div class="abs" style="left:457px;top:462px;width:257px;height:1px;background:#000"></div>
<div class="abs" style="left:457px;top:483px;width:227px;height:1px;background:#000"></div>
<div class="abs" style="left:457px;top:504px;width:243px;height:1px;background:#000"></div>
<div class="abs" style="left:457px;top:525px;width:212px;height:1px;background:#000"></div>
<div class="abs" style="left:457px;top:546px;width:318px;height:1px;background:#000"></div>
<div class="abs" style="left:457px;top:567px;width:245px;height:1px;background:#000"></div>
<div class="abs" style="left:457px;top:588px;width:266px;height:1px;background:#000"></div>
</body></html>
